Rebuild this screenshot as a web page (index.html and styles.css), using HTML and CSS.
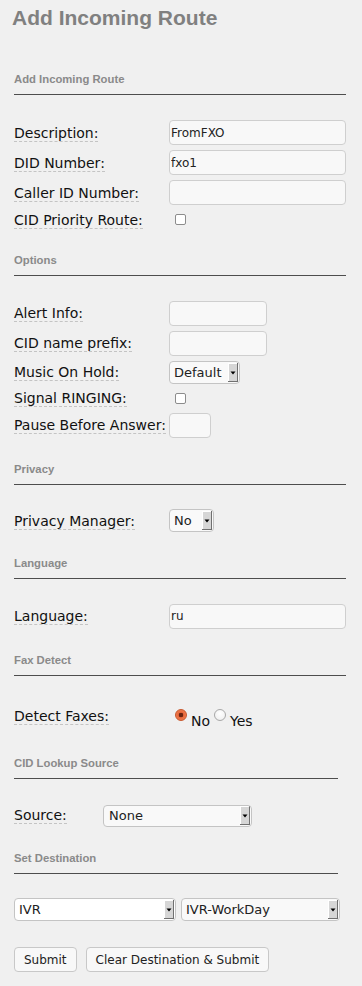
FILE: index.html
```html
<!DOCTYPE html>
<html lang="en">
<head>
    <meta charset="UTF-8">
    <meta name="viewport" content="width=device-width, initial-scale=1.0">
    <title>Add Incoming Route</title>
    <link rel="stylesheet" href="styles.css">
</head>
<body>
    <div class="page">
        <h2 class="page-title">Add Incoming Route</h2>

        <form class="route-form">
            <h5 class="section-head">Add Incoming Route</h5>
            <div class="fields">
                <div class="row">
                    <span class="cell-label"><a class="info">Description:</a></span>
                    <input type="text" class="text-input wide" value="FromFXO">
                </div>
                <div class="row">
                    <span class="cell-label"><a class="info">DID Number:</a></span>
                    <input type="text" class="text-input wide" value="fxo1">
                </div>
                <div class="row">
                    <span class="cell-label"><a class="info">Caller ID Number:</a></span>
                    <input type="text" class="text-input wide" value="">
                </div>
                <div class="row check-row">
                    <span class="cell-label"><a class="info">CID Priority Route:</a></span>
                    <input type="checkbox" class="check">
                </div>
            </div>

            <h5 class="section-head">Options</h5>
            <div class="fields">
                <div class="row">
                    <span class="cell-label"><a class="info">Alert Info:</a></span>
                    <input type="text" class="text-input medium" value="">
                </div>
                <div class="row">
                    <span class="cell-label"><a class="info">CID name prefix:</a></span>
                    <input type="text" class="text-input medium" value="">
                </div>
                <div class="row">
                    <span class="cell-label"><a class="info">Music On Hold:</a></span>
                    <select class="select moh">
                        <option>Default</option>
                    </select>
                </div>
                <div class="row check-row">
                    <span class="cell-label"><a class="info">Signal RINGING:</a></span>
                    <input type="checkbox" class="check">
                </div>
                <div class="row">
                    <span class="cell-label"><a class="info">Pause Before Answer:</a></span>
                    <input type="text" class="text-input tiny" value="">
                </div>
            </div>

            <h5 class="section-head">Privacy</h5>
            <div class="fields">
                <div class="row">
                    <span class="cell-label"><a class="info">Privacy Manager:</a></span>
                    <select class="select privacy">
                        <option>No</option>
                        <option>Yes</option>
                    </select>
                </div>
            </div>

            <h5 class="section-head">Language</h5>
            <div class="fields">
                <div class="row">
                    <span class="cell-label"><a class="info">Language:</a></span>
                    <input type="text" class="text-input wide" value="ru">
                </div>
            </div>

            <h5 class="section-head">Fax Detect</h5>
            <div class="fields">
                <div class="row radio-row">
                    <span class="cell-label"><a class="info">Detect Faxes:</a></span>
                    <span class="radio-group">
                        <label class="radio-opt"><input type="radio" name="faxenabled" class="radio" checked><span>No</span></label>
                        <label class="radio-opt"><input type="radio" name="faxenabled" class="radio"><span>Yes</span></label>
                    </span>
                </div>
            </div>

            <h5 class="section-head short">CID Lookup Source</h5>
            <div class="fields">
                <div class="row source-row">
                    <span class="cell-label narrow"><a class="info">Source:</a></span>
                    <select class="select source">
                        <option>None</option>
                    </select>
                </div>
            </div>

            <h5 class="section-head short">Set Destination</h5>
            <div class="fields">
                <div class="row dest-row">
                    <select class="select dest-type">
                        <option>IVR</option>
                    </select>
                    <select class="select dest-item">
                        <option>IVR-WorkDay</option>
                    </select>
                </div>
            </div>

            <div class="actions">
                <button type="button" class="btn">Submit</button>
                <button type="button" class="btn">Clear Destination &amp; Submit</button>
            </div>
        </form>
    </div>
</body>
</html>
```

FILE: styles.css
```css
* {
    margin: 0;
    padding: 0;
    box-sizing: border-box;
}

body {
    background-color: #f0f0f0;
    font-family: "DejaVu Sans", Verdana, sans-serif;
    font-size: 14px;
    color: #111;
}

.page {
    padding: 0 16px 20px 14px;
}

.page-title {
    margin: 6px 0 0 -2px;
    font-family: "Liberation Sans", Arial, sans-serif;
    font-size: 21px;
    line-height: 24px;
    font-weight: bold;
    color: #808080;
}

.section-head {
    margin-top: 24px;
    margin-bottom: 24.5px;
    padding-bottom: 8px;
    font-family: "Liberation Sans", Arial, sans-serif;
    font-size: 11.3px;
    line-height: 14px;
    font-weight: bold;
    color: #8a8a8a;
    border-bottom: 1px solid #4d4d4d;
}

.page-title + .route-form .section-head:first-child {
    margin-top: 42px;
    margin-bottom: 25px;
}

.section-head.short {
    margin-right: 8px;
}

.fields {
    display: flex;
    flex-direction: column;
    gap: 5px;
}

.row {
    display: flex;
    align-items: center;
}

.check-row {
    height: 19px;
}

.cell-label {
    width: 155px;
    flex-shrink: 0;
}

.cell-label.narrow {
    width: 89px;
}

.info {
    border-bottom: 1px dashed #c4c4c4;
    color: #111;
    text-decoration: none;
}

.text-input {
    height: 25px;
    padding: 0 2px 0 1px;
    border: 1px solid #cfcfcf;
    border-radius: 4px;
    background-color: #f8f8f8;
    font-family: "DejaVu Sans", Verdana, sans-serif;
    font-size: 12px;
    color: #222;
}

.text-input:focus {
    outline: none;
    border-color: #aaa;
}

.text-input.wide {
    width: 178px;
}

.text-input.medium {
    width: 98px;
}

.text-input.tiny {
    width: 42px;
}

.check {
    appearance: none;
    -webkit-appearance: none;
    width: 11px;
    height: 11px;
    margin-left: 6px;
    border: 1px solid #8c8c8c;
    border-radius: 2px;
    background-color: #fff;
}

.select {
    appearance: none;
    -webkit-appearance: none;
    height: 23px;
    padding: 0 16px 0 4px;
    border: 1px solid #c4c4c4;
    border-radius: 4px;
    background-color: #f9f9f9;
    background-image: url("data:image/svg+xml;utf8,<svg xmlns='http://www.w3.org/2000/svg' width='10' height='19'><rect width='10' height='19' fill='%23d6d6d6'/><path d='M0.5 0V18.5M0 0.5H9.5' stroke='%23ffffff'/><path d='M9.5 0V19M0 18.5H10' stroke='%23707070'/><path d='M2.5 8.5H7.5L5 11.5Z' fill='%23000'/></svg>");
    background-repeat: no-repeat;
    background-position: right 1px center;
    font-family: "DejaVu Sans", Verdana, sans-serif;
    font-size: 13px;
    color: #222;
}

.select.moh {
    width: 71px;
}

.select.privacy {
    width: 45px;
}

.select.source {
    width: 149px;
    height: 22px;
    margin-top: 1px;
    padding-left: 5px;
}

.dest-row {
    gap: 5px;
}

.select.dest-type {
    width: 162px;
    background-color: #fff;
}

.select.dest-item {
    width: 159px;
}

.radio-row {
    align-items: flex-start;
    padding: 8px 0 3px;
}

.radio-group {
    display: flex;
    gap: 4px;
    margin-left: 6px;
    padding-top: 1px;
}

.radio-opt {
    display: inline-flex;
    align-items: flex-start;
    gap: 4px;
}

.radio-opt span {
    margin-top: 4px;
    line-height: 16px;
}

.radio {
    appearance: none;
    -webkit-appearance: none;
    width: 12px;
    height: 12px;
    border: 1px solid #a8a8a8;
    border-radius: 50%;
    background: radial-gradient(circle at 50% 35%, #fff 0%, #f2f2f2 70%, #e0e0e0 100%);
}

.radio:checked {
    border-color: #c8552a;
    background: radial-gradient(circle, #6b2410 0, #6b2410 2px, #e9673a 2.6px, #f08a5c 100%);
}

.actions {
    display: flex;
    gap: 9px;
    margin-top: 26px;
}

.btn {
    height: 25px;
    padding: 0 9px;
    border: 1px solid #c8c8c8;
    border-radius: 4px;
    background-color: #f8f8f8;
    font-family: "DejaVu Sans", Verdana, sans-serif;
    font-size: 12px;
    color: #222;
    cursor: pointer;
}

.btn:hover {
    background-color: #eee;
}
```
